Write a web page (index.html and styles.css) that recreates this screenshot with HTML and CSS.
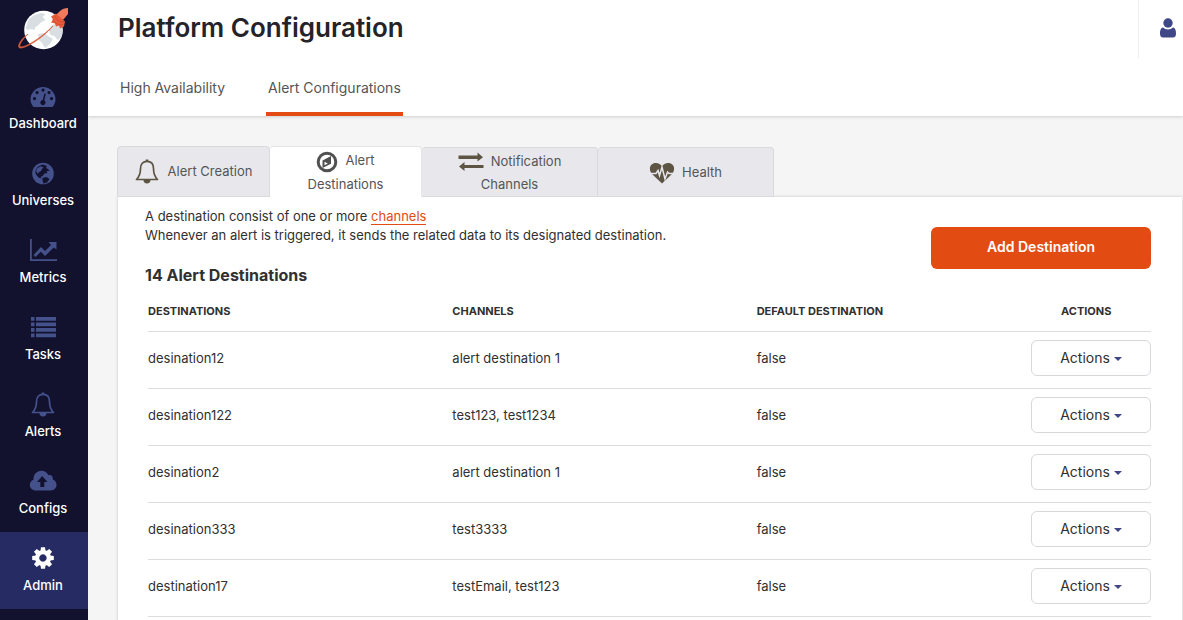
FILE: index.html
```html
<!DOCTYPE html>
<html lang="en">
<head>
<meta charset="utf-8">
<title>Platform Configuration</title>
<link rel="stylesheet" href="styles.css">
</head>
<body>
<div class="app">
  <nav class="sidebar" aria-label="Main">
    <a class="logo" href="#" aria-label="Home">
      <svg width="54" height="44" viewBox="0 0 54 44">
        <circle cx="27.500" cy="23" r="19.300" fill="#fff"/>
        <path d="M12.500 12.500l5-4 7-2.500 5 1-3 3 3 3-4 2-3 3-3 2-1 3-3-1-4 1-2-2z" fill="#d8dee1"/>
        <path d="M36 18l6-2 4 5 .5 5-2 5-3 2-3-4-4-1-2-5zM22 27l6-1 4 3 5 3-3 5-5 4-3-5-3-3z" fill="#d8dee1"/>
        <path d="M12 27C5 32 1.500 38 3 40.500C6 43.500 25 33 37 19C24 32 7 42 4 39.500C3 38 6 33 12 27z" fill="#dc5a38" stroke="#dc5a38" stroke-width=".7"/>
        <path d="M39 9l5-5c2-2 5-3 8-3v6l-5 6z" fill="#f07a5a"/>
        <path d="M35 9.500l5-3 9 8-1 5-4 2-1-3-3 1-1-3-4-1 2-3z" fill="#e85a3a"/>
        <path d="M37 12c1 4 5 6 10 6M39 9c1 4 4 6 9 6" stroke="#c9472a" stroke-width=".7" fill="none"/>
      </svg>
    </a>
    <a class="nav-item" href="#">
      <svg width="28" height="28" viewBox="0 0 28 28"><path fill="currentColor" fill-rule="evenodd" d="M4.500 24C2.500 21.500 1.500 19 1.500 16.500a12.500 12.500 0 0 1 25 0c0 2.500-1 5-3 7.500zM14 5.500a1.600 1.600 0 1 0 .1 0zM8 8a1.600 1.600 0 1 0 .1 0zM20 8a1.600 1.600 0 1 0 .1 0zM5.500 14a1.600 1.600 0 1 0 .1 0zM22.500 14a1.600 1.600 0 1 0 .1 0zM15.300 10.500l-1.500 6.500a2.600 2.600 0 1 0 1.500.4l1.500-6.600z"/></svg>
      <span>Dashboard</span>
    </a>
    <a class="nav-item" href="#">
      <svg width="28" height="28" viewBox="0 0 28 28"><circle cx="14" cy="13.500" r="10.800" fill="currentColor"/><path fill="#12122f" d="M13.500 4.500l4.500 1.500-1 2 2 1 1.500 2-3 0 1 2-3 .5-2 2.500-2 1 1 1.500-2-.5-2-1.500-2-3 0-3 2-3.500zM13.500 18l4-1 3 2-2.500 3.500-3.500 1-1-3z"/><path fill="currentColor" d="M8.500 8l3-1.500 3 .5-1.500 2-1 2-2 1-1 2-2-3z"/></svg>
      <span>Universes</span>
    </a>
    <a class="nav-item" href="#">
      <svg width="28" height="28" viewBox="0 0 28 28"><path fill="currentColor" d="M1 2h1.800v20.200h26V24H1zM4.500 18l7.500-8 4 4 6-6-2.500-3h8v7.500l-2.700-2-8.800 8.500-4.200-4.200-5.300 5.200z"/></svg>
      <span>Metrics</span>
    </a>
    <a class="nav-item" href="#">
      <svg width="28" height="28" viewBox="0 0 28 28"><path fill="currentColor" d="M2 3h3.500v3.700H2zM7 3h20v3.700H7zM2 8.500h3.500v3.700H2zM7 8.500h20v3.700H7zM2 14h3.500v3.700H2zM7 14h20v3.700H7zM2 19.500h3.500v3.700H2zM7 19.500h20v3.700H7z"/></svg>
      <span>Tasks</span>
    </a>
    <a class="nav-item" href="#">
      <svg width="28" height="28" viewBox="0 0 28 28"><g id="bell"><path fill="none" stroke="currentColor" stroke-width="1.700" stroke-linejoin="round" d="M3.500 21.500C7 18 7.500 14 7.500 10.500C7.500 6 10 3.300 14 3.300S20.500 6 20.500 10.500C20.500 14 21 18 24.500 21.500z"/><path fill="currentColor" d="M12.700 1.500h2.600v2h-2.600zM10.500 22h7a3.500 3.500 0 0 1-7 0z"/></g></svg>
      <span>Alerts</span>
    </a>
    <a class="nav-item" href="#">
      <svg width="28" height="28" viewBox="0 0 28 28"><path fill="currentColor" fill-rule="evenodd" d="M7 22.500C3.500 22.500.8 20 .8 17c0-2.500 1.500-4.500 3.700-5.300C4.300 6.500 7.800 2.800 12.300 2.800c3.300 0 6 1.800 7.200 4.500 2.500-.8 4.800 1 4.300 4.300 2.200.8 3.700 2.700 3.700 5.200 0 3.300-2.500 5.700-5.700 5.700zM13.200 8l-5.200 6h3.300V19h4V14h3.200z"/></svg>
      <span>Configs</span>
    </a>
    <a class="nav-item nav-active" href="#" aria-current="page">
      <svg width="28" height="28" viewBox="0 1 28 28"><g fill="currentColor"><path fill-rule="evenodd" d="M14 6a8 8 0 1 0 .1 0zM14 10.300a3.700 3.700 0 1 1-.1 0z"/><path id="tooth" d="M11.500 7l.5-3.800h4l.5 3.800z"/><use href="#tooth" transform="rotate(45 14 14)"/><use href="#tooth" transform="rotate(90 14 14)"/><use href="#tooth" transform="rotate(135 14 14)"/><use href="#tooth" transform="rotate(180 14 14)"/><use href="#tooth" transform="rotate(225 14 14)"/><use href="#tooth" transform="rotate(270 14 14)"/><use href="#tooth" transform="rotate(315 14 14)"/></g></svg>
      <span>Admin</span>
    </a>
  </nav>

  <div class="page">
    <header class="header">
      <div class="title-row">
        <h1>Platform Configuration</h1>
        <button class="user" type="button" aria-label="User menu">
          <svg width="18" height="20" viewBox="0 0 18 20"><path fill="currentColor" d="M4 9.500C1.500 10 1 13 1 15.500c0 2.500 1 4 3 4h10c2 0 3-1.500 3-4 0-2.500-.5-5.500-3-6a7 7 0 0 1-10 0z"/><circle cx="9" cy="5" r="4.700" fill="currentColor"/></svg>
        </button>
      </div>
      <div class="main-tabs">
        <a href="#">High Availability</a>
        <a class="selected" href="#">Alert Configurations</a>
      </div>
    </header>

    <main class="content">
      <div class="tabs">
        <a class="tab narrow" href="#"><span><svg width="28" height="28" viewBox="0 0 28 28"><use href="#bell"/></svg>Alert Creation</span></a>
        <a class="tab narrow current" href="#"><span><svg width="22" height="22" viewBox="0 0 22 22"><circle cx="11" cy="11" r="8.800" fill="none" stroke="currentColor" stroke-width="3"/><path fill="currentColor" fill-rule="evenodd" d="M6.500 9.500l8.500-4.500v7.800L6.500 17zM8.500 10.800v3.500l3.300-1.700z"/></svg>Alert Destinations</span></a>
        <a class="tab low" href="#"><span><svg width="26" height="22" viewBox="0 0 26 22"><path fill="currentColor" d="M.5 4.500h19V1.500l5.500 4.700-5.500 4.300V8H.5zM25.500 17h-19v3L1 15.500l5.500-4.500v3h19z"/></svg>Notification Channels</span></a>
        <a class="tab low" href="#"><span><svg width="26" height="24" viewBox="0 0 26 24"><path fill="currentColor" d="M13 22.500L3.500 13.500C-1 9 .5 2 7 2c2.500 0 4.800 1.500 6 3 1.200-1.500 3.500-3 6-3 6.500 0 8 7 3.500 11.500z"/><path fill="none" stroke="#e8e8ec" stroke-width="1.500" d="M1 12.500h6l2-3 1.500 5L13 6l3 12 2.500-7 1.500 1.500h5"/></svg>Health</span></a>
      </div>

      <section class="panel">
        <div class="intro">
          <div>
            <p>A destination consist of one or more <a href="#">channels</a><br>Whenever an alert is triggered, it sends the related data to its designated destination.</p>
            <h2>14 Alert Destinations</h2>
          </div>
          <button class="add" type="button">Add Destination</button>
        </div>
        <table>
          <thead><tr><th>DESTINATIONS</th><th>CHANNELS</th><th>DEFAULT DESTINATION</th><th class="act">ACTIONS</th></tr></thead>
          <tbody>
            <tr><td>desination12</td><td>alert destination 1</td><td>false</td><td class="act"><button type="button">Actions<i></i></button></td></tr>
            <tr><td>desination122</td><td>test123, test1234</td><td>false</td><td class="act"><button type="button">Actions<i></i></button></td></tr>
            <tr><td>desination2</td><td>alert destination 1</td><td>false</td><td class="act"><button type="button">Actions<i></i></button></td></tr>
            <tr><td>desination333</td><td>test3333</td><td>false</td><td class="act"><button type="button">Actions<i></i></button></td></tr>
            <tr><td>destination17</td><td>testEmail, test123</td><td>false</td><td class="act"><button type="button">Actions<i></i></button></td></tr>
          </tbody>
        </table>
      </section>
    </main>
  </div>
</div>
</body>
</html>
```
FILE: styles.css
```css
* { box-sizing: border-box; }
body { margin: 0; background: #f5f5f5; color: #303030; font: 13px/19px Inter, "Liberation Sans", sans-serif; }
a { color: inherit; text-decoration: none; }
button { font: inherit; color: inherit; cursor: pointer; }
h1, h2, p { margin: 0; }

.app { display: flex; height: 100vh; overflow: hidden; }

.sidebar { flex: 0 0 88px; background: #12122f; }
.logo { display: block; height: 70px; padding: 7px 0 0 16px; }
.nav-item { display: flex; flex-direction: column; align-items: center; gap: 3px; height: 77px; padding: 13px 2px 0 0; color: #44518b; }
.nav-item span { color: #fff; font-weight: 500; }
.nav-active { background: #262c63; color: #fff; }

.page { flex: 1; min-width: 0; }
.header { position: relative; background: #fff; box-shadow: 0 1px 3px rgba(0, 0, 0, .16); }
.title-row { display: flex; justify-content: space-between; height: 58px; padding-left: 30px; }
h1 { color: #232329; font-size: 26px; line-height: 56px; font-weight: 600; }
.user { width: 45px; padding: 0 0 2px 14px; border: 0; border-left: 1px solid #eee; background: none; color: #3f4786; text-align: center; }
.user svg { display: block; margin: 0 auto; }
.main-tabs { display: flex; gap: 39px; height: 58px; padding-left: 30px; color: #555; font-size: 14px; line-height: 60px; }
.main-tabs a { padding: 0 2px; }
.main-tabs .selected { border-bottom: 4px solid #e24c12; }

.content { padding: 30px 1px 0 29px; }
.tabs { display: flex; position: relative; align-items: flex-end; }
.tab { display: flex; align-items: center; justify-content: center; width: 176px; height: 51px; padding: 2px 28px 0; border: 1px solid #d9d9dd; border-left-width: 0; border-radius: 4px 4px 0 0; background: #e8e8ec; color: #555; font-size: 13px; line-height: 23px; text-align: center; }
.tab:first-child { border-left-width: 1px; }
.tab.narrow { width: 153px; padding: 0 14px 0 12px; }
.tab.current { width: 152px; padding: 2px 28px 0; background: #fff; border-color: #e4e4e4; border-bottom-color: #fff; }
.tab.low { height: 50px; }
.tab svg { margin-right: 7px; vertical-align: middle; color: #5d5444; }
.tab.current svg { color: #505050; }

.panel { margin-left: 1px; padding: 10px 31px 0 27px; background: #fff; box-shadow: 0 0 3px rgba(0, 0, 0, .2); min-height: 500px; }
.intro { display: flex; justify-content: space-between; align-items: flex-start; }
.intro p a { color: #e24c12; border-bottom: 1px solid #e24c12; }
h2 { margin-top: 20px; font-size: 16px; line-height: 20px; font-weight: 700; color: #303030; }
.add { width: 220px; height: 42px; margin-top: 20px; padding: 0 0 3px; border: 0; border-radius: 6px; background: #e24c12; color: #fff; font-size: 14px; font-weight: 600; }

table { width: calc(100% - 3px); margin: 8px 0 0 3px; border-collapse: collapse; table-layout: fixed; }
th { height: 38px; padding: 0; font-size: 11px; font-weight: 700; text-align: left; }
td { height: 57px; padding: 0 0 3px; }
tr { border-bottom: 1px solid #ddd; }
.act { width: 90px; text-align: right; }
th.act { text-align: left; }
td.act button { width: 120px; height: 36px; padding: 0 0 2px; margin-left: -30px; border: 1px solid #d8d8dc; border-radius: 6px; background: #fff; font-size: 14px; }
td.act i { display: inline-block; margin-left: 4px; vertical-align: 2px; border: 4px solid transparent; border-top-color: #3f4786; border-bottom: 0; }
```
